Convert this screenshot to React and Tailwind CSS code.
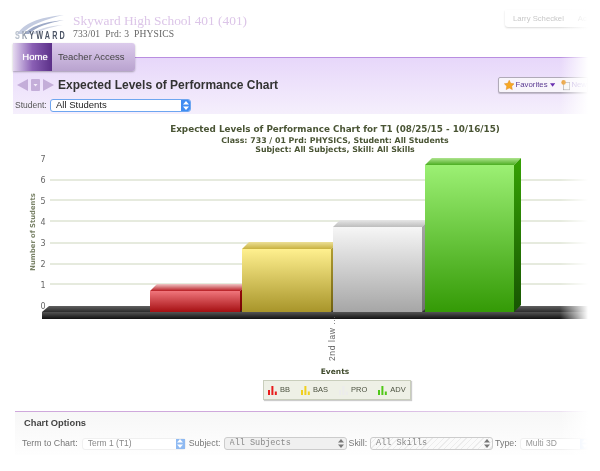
import React from "react";

const gridLines = [180, 200, 221, 243, 264, 284];
const yLabels = [
  ["7", 162],
  ["6", 183],
  ["5", 204],
  ["4", 225],
  ["3", 246],
  ["2", 267],
  ["1", 288],
  ["0", 309],
];

// x = left of front face, top = top of front face
const bars = [
  { id: "red", x: 150, w: 90, top: 291, front: ["#f0767c", "#a50f12"], roof: ["#b81c22", "#f0c5c5"], side: ["#a00c0c", "#700404"] },
  { id: "yellow", x: 242, w: 89, top: 249, front: ["#fff08f", "#a8952a"], roof: ["#c9b240", "#ecdf96"], side: ["#b8a436", "#6f6010"] },
  { id: "gray", x: 333, w: 89, top: 227, front: ["#f6f6f6", "#a6a6a6"], roof: ["#bdbdbd", "#e6e6e6"], side: ["#a8a8a8", "#707070"] },
  { id: "green", x: 425, w: 89, top: 165, front: ["#9cf074", "#349a06"], roof: ["#4cae22", "#aee48e"], side: ["#36a204", "#175402"] },
];

function Logo() {
  return (
    <div className="relative h-[28px] w-[52px]">
      <svg className="absolute left-0 top-0" width="52" height="22" viewBox="0 0 52 22" fill="none">
        <path d="M2 21C9 11 23 4 49 2C30 6 15 12 7 21Z" fill="#c3cbe0" />
        <path d="M9 21C15 14 27 9 49 7C33 10 21 14 14 21Z" fill="#9da9c6" />
        <path d="M16 21C21 17 31 13 48 12C36 14 26 17 21 21Z" fill="#d3d8e6" />
      </svg>
      <div className="absolute left-0 top-[18px] origin-left scale-x-[0.72] whitespace-nowrap text-[10px] font-bold leading-[10px] tracking-[3px] text-[#4c5566]">
        <span className="text-[#b8c0cc]">S</span>
        <span className="text-[#8f98a8]">K</span>
        <span>YWARD</span>
      </div>
    </div>
  );
}

function Select({ label, className, arrow }) {
  return (
    <div className={`flex items-center rounded-[3px] ${className}`}>
      <span className="flex-1 truncate">{label}</span>
      {arrow}
    </div>
  );
}

function UpDown({ color = "#fff" }) {
  return (
    <svg width="6" height="9" viewBox="0 0 6 9" fill={color}>
      <path d="M3 0L6 3.4H0Z" />
      <path d="M3 9L0 5.6H6Z" />
    </svg>
  );
}

function Header() {
  return (
    <div className="flex h-[43px] pl-[2px]">
      <div className="pt-[13px]">
        <Logo />
      </div>
      <div className="ml-[6px] pt-[13px]" style={{ fontFamily: '"Liberation Serif", serif' }}>
        <div className="whitespace-nowrap text-[13.4px] leading-[16px] text-[#dcc5e8]">Skyward High School 401 (401)</div>
        <div className="-mt-[1px] whitespace-nowrap text-[9.6px] leading-[11px] tracking-[0.1px] text-[#666]">
          733/01&nbsp; Prd: 3&nbsp; PHYSICS
        </div>
      </div>
      <div className="ml-auto mt-[10px] flex h-[17px] w-[83px] items-center gap-[14px] rounded-bl-[3px] pl-[8px] text-[7.7px] text-[#c8c8c8] shadow-[0_1px_2px_rgba(0,0,0,0.15)]">
        <span className="whitespace-nowrap">Larry Scheckel</span>
        <span>Ac</span>
      </div>
    </div>
  );
}

function Tabs() {
  return (
    <div className="relative z-10 flex h-[28px] w-[122px] rounded-r-[3px] text-[9.5px] shadow-[0_1px_2px_rgba(0,0,0,0.3)]">
      <div className="flex w-[39px] items-center justify-center bg-gradient-to-r from-[#e6daf0] via-[#8a5fb4] to-[#5b2f88] pl-[5px] text-white [text-shadow:0_0_1px_#fff]">
        Home
      </div>
      <div className="flex flex-1 items-center rounded-r-[3px] bg-gradient-to-b from-[#dccbec] to-[#b9a3cf] pl-[6px] text-[#444]">
        Teacher Access
      </div>
    </div>
  );
}

function Toolbar() {
  return (
    <div className="-mt-[14px] h-[57px] border-t border-[#b98ee0] bg-gradient-to-b from-[#e7d7fa] to-[#f5effc]">
      <div className="flex items-center pl-[4px] pt-[19px]">
        <svg width="38" height="14" viewBox="0 0 38 14">
          <path d="M0 7L11 1V13Z" fill="#c4aed9" />
          <rect x="14" y="1" width="9" height="12" rx="1" fill="#c4aed9" />
          <path d="M16.5 6H20.5L18.5 8.5Z" fill="#f4eefa" />
          <path d="M37 7L26 1V13Z" fill="#c4aed9" />
        </svg>
        <div className="ml-[3px] whitespace-nowrap text-[12px] font-bold leading-[14px] text-[#333]">
          Expected Levels of Performance Chart
        </div>
        <div className="ml-auto flex h-[16px] w-[90px] shrink-0 items-center rounded-l-[2px] border border-[#b0aab8] bg-[#f8f5fb] pl-[5px] text-[7.8px] text-[#5b3a92] shadow-[0_1px_1px_rgba(0,0,0,0.2)]">
          <svg width="12" height="12" viewBox="0 0 12 12">
            <path d="M6 .5L7.7 4.1L11.6 4.6L8.8 7.3L9.5 11.3L6 9.4L2.5 11.3L3.2 7.3L.4 4.6L4.3 4.1Z" fill="#f7a823" stroke="#d9861a" strokeWidth=".5" />
          </svg>
          <span className="ml-[1px]">Favorites</span>
          <svg className="ml-[2px]" width="6" height="4" viewBox="0 0 6 4" fill="#6a2fb0">
            <path d="M0 0H6L3 4Z" />
          </svg>
          <svg className="ml-[6px]" width="11" height="12" viewBox="0 0 11 12">
            <rect x="3" y="3" width="7" height="8.5" fill="#f6f6f6" stroke="#999" strokeWidth=".7" />
            <circle cx="3" cy="3" r="2.6" fill="#e9a03a" />
          </svg>
          <span className="ml-[1px] text-[#b6a3dc]">New</span>
        </div>
      </div>
      <div className="mt-[6px] flex items-center">
        <span className="ml-[2px] w-[35px] text-[8.5px] leading-[13px] text-[#555]">Student:</span>
        <Select
          label="All Students"
          className="h-[13px] w-[141px] border border-[#6ea6f0] bg-white pl-[5px] text-[9.5px] text-[#222]"
          arrow={
            <span className="flex h-full w-[9px] items-center justify-center rounded-r-[2px] bg-[#3f8cf2]">
              <UpDown />
            </span>
          }
        />
      </div>
    </div>
  );
}

function Chart() {
  const chartFont = '"DejaVu Sans", sans-serif';
  return (
    <svg className="-ml-[13px] mt-[6px] block" width="600" height="258" viewBox="0 120 600 258" style={{ fontFamily: chartFont }}>
      <defs>
        {bars.map((b) => (
          <React.Fragment key={b.id}>
            <linearGradient id={`${b.id}-front`} x1="0" y1="0" x2="0" y2="1">
              <stop offset="0" stopColor={b.front[0]} />
              <stop offset="1" stopColor={b.front[1]} />
            </linearGradient>
            <linearGradient id={`${b.id}-roof`} x1="0" y1="1" x2="0" y2="0">
              <stop offset="0" stopColor={b.roof[0]} />
              <stop offset="1" stopColor={b.roof[1]} />
            </linearGradient>
            <linearGradient id={`${b.id}-side`} x1="0" y1="0" x2="0" y2="1">
              <stop offset="0" stopColor={b.side[0]} />
              <stop offset="1" stopColor={b.side[1]} />
            </linearGradient>
          </React.Fragment>
        ))}
        <linearGradient id="floor-top" x1="0" y1="0" x2="0" y2="1">
          <stop offset="0" stopColor="#606060" />
          <stop offset="1" stopColor="#2c2c2c" />
        </linearGradient>
        <linearGradient id="floor-front" x1="0" y1="0" x2="0" y2="1">
          <stop offset="0" stopColor="#555" />
          <stop offset="1" stopColor="#111" />
        </linearGradient>
      </defs>

      <g textAnchor="middle" fontWeight="700" fill="#4a5535">
        <text x="335" y="132" fontSize="8.8">Expected Levels of Performance Chart for T1 (08/25/15 - 10/16/15)</text>
        <text x="335" y="142.5" fontSize="7.85">Class: 733 / 01 Prd: PHYSICS, Student: All Students</text>
        <text x="335" y="152" fontSize="7.85">Subject: All Subjects, Skill: All Skills</text>
      </g>

      {gridLines.map((y) => (
        <line key={y} x1="50" x2="590" y1={y} y2={y} stroke="#cdd6bd" strokeWidth="1" />
      ))}
      {yLabels.map(([t, y]) => (
        <text key={t} x="43" y={y} fontSize="8" textAnchor="middle" fill="#666">{t}</text>
      ))}
      <text transform="translate(35 232) rotate(-90)" fontSize="6.8" fontWeight="700" textAnchor="middle" fill="#7a8368">
        Number of Students
      </text>

      <path d="M49 306H600V312H42Z" fill="url(#floor-top)" />
      <rect x="42" y="312" width="558" height="7" fill="url(#floor-front)" />

      {bars.map((b) => {
        const r = b.x + b.w;
        return (
          <g key={b.id}>
            <path d={`M${b.x} ${b.top}L${b.x + 7} ${b.top - 7}H${r + 7}L${r} ${b.top}Z`} fill={`url(#${b.id}-roof)`} />
            <path d={`M${r} ${b.top}L${r + 7} ${b.top - 7}V305L${r} 312Z`} fill={`url(#${b.id}-side)`} />
            <rect x={b.x} y={b.top} width={b.w} height={312 - b.top} fill={`url(#${b.id}-front)`} />
          </g>
        );
      })}

      <text transform="translate(335 361) rotate(-90)" fontSize="8.5" letterSpacing=".6" fill="#666" fontFamily='"Liberation Sans", sans-serif'>2nd law ...</text>
      <text x="335" y="374" fontSize="7.5" fontWeight="700" textAnchor="middle" fill="#3f4a2c">Events</text>
    </svg>
  );
}

function MiniBars({ color }) {
  return (
    <svg width="9" height="9" viewBox="0 0 9 9" fill={color}>
      <rect x="0" y="4" width="2" height="5" />
      <rect x="3.4" y="0" width="2" height="9" />
      <rect x="6.8" y="5.5" width="2" height="3.5" />
    </svg>
  );
}

function Legend() {
  const items = [
    ["BB", "#e81c1c"],
    ["BAS", "#f0d020"],
    ["PRO", "#ececec"],
    ["ADV", "#50c818"],
  ];
  return (
    <div className="ml-[250px] mt-[2px] flex h-[20px] w-[148px] items-center gap-[11px] border border-[#c9cebc] bg-[#eef0e6] pl-[4px] text-[7.5px] text-[#4c5240] shadow-[1px_1px_1px_rgba(0,0,0,0.2)]">
      {items.map(([name, color]) => (
        <div key={name} className="flex items-center gap-[3px]">
          <MiniBars color={color} />
          <span>{name}</span>
        </div>
      ))}
    </div>
  );
}

function ChartOptions() {
  const label = "text-[8.8px] text-[#777] whitespace-nowrap";
  const mono = { fontFamily: '"Liberation Mono", monospace' };
  return (
    <div className="ml-[2px] mt-[11px] h-[44px] bg-gradient-to-b from-[#f7f7f7] to-[#fefefe]">
      <div className="h-px bg-gradient-to-r from-[#cfa8dc] via-[#cfa8dc] to-[#f0e6f4]"></div>
      <div className="pl-[9px] pt-[5px] text-[9.3px] font-bold leading-[12px] text-[#444]">Chart Options</div>
      <div className="mt-[8px] flex items-center pl-[7px]">
        <span className={label}>Term to Chart:</span>
        <Select
          label="Term 1 (T1)"
          className="ml-[4px] h-[12px] w-[104px] shrink-0 border border-[#f0f0f0] bg-white pl-[5px] text-[8.5px] text-[#888]"
          arrow={
            <span className="flex h-full w-[9px] items-center justify-center bg-[#8fbaf2]">
              <UpDown />
            </span>
          }
        />
        <span className={`ml-[3px] ${label}`}>Subject:</span>
        <div style={mono} className="ml-[3px] shrink-0">
          <Select
            label="All Subjects"
            className="h-[13px] w-[123px] border border-[#ccc] bg-[#f0f0f0] pl-[5px] pr-[2px] text-[8.5px] text-[#888]"
            arrow={<UpDown color="#777" />}
          />
        </div>
        <span className={`ml-[2px] ${label}`}>Skill:</span>
        <div style={mono} className="ml-[3px] shrink-0">
          <Select
            label="All Skills"
            className="h-[13px] w-[123px] border border-[#ccc] bg-[repeating-linear-gradient(135deg,#fafafa_0,#fafafa_3px,#ececec_3px,#ececec_4px)] pl-[5px] pr-[2px] text-[8.5px] text-[#888]"
            arrow={<UpDown color="#777" />}
          />
        </div>
        <span className={`ml-[2px] ${label}`}>Type:</span>
        <Select
          label="Multi 3D"
          className="ml-[3px] h-[12px] w-[71px] shrink-0 border border-[#f0f0f0] bg-white pl-[5px] text-[8.5px] text-[#999]"
          arrow={
            <span className="flex h-full w-[10px] items-center justify-center bg-[#d8e6fa]">
              <UpDown />
            </span>
          }
        />
      </div>
    </div>
  );
}

export default function App() {
  return (
    <div
      className="relative h-[471px] w-[600px] overflow-hidden bg-white blur-[0.4px]"
      style={{ fontFamily: '"Liberation Sans", Arial, sans-serif' }}
    >
      <div className="ml-[13px] w-[575px]">
        <Header />
        <Tabs />
        <Toolbar />
        <Chart />
        <Legend />
        <ChartOptions />
      </div>
      {/* right edge fades out to white */}
      <div className="pointer-events-none absolute inset-y-0 left-[560px] z-20 w-[28px] bg-gradient-to-r from-white/0 to-white"></div>
      <div className="pointer-events-none absolute inset-y-0 left-[588px] z-20 w-[12px] bg-white"></div>
    </div>
  );
}
